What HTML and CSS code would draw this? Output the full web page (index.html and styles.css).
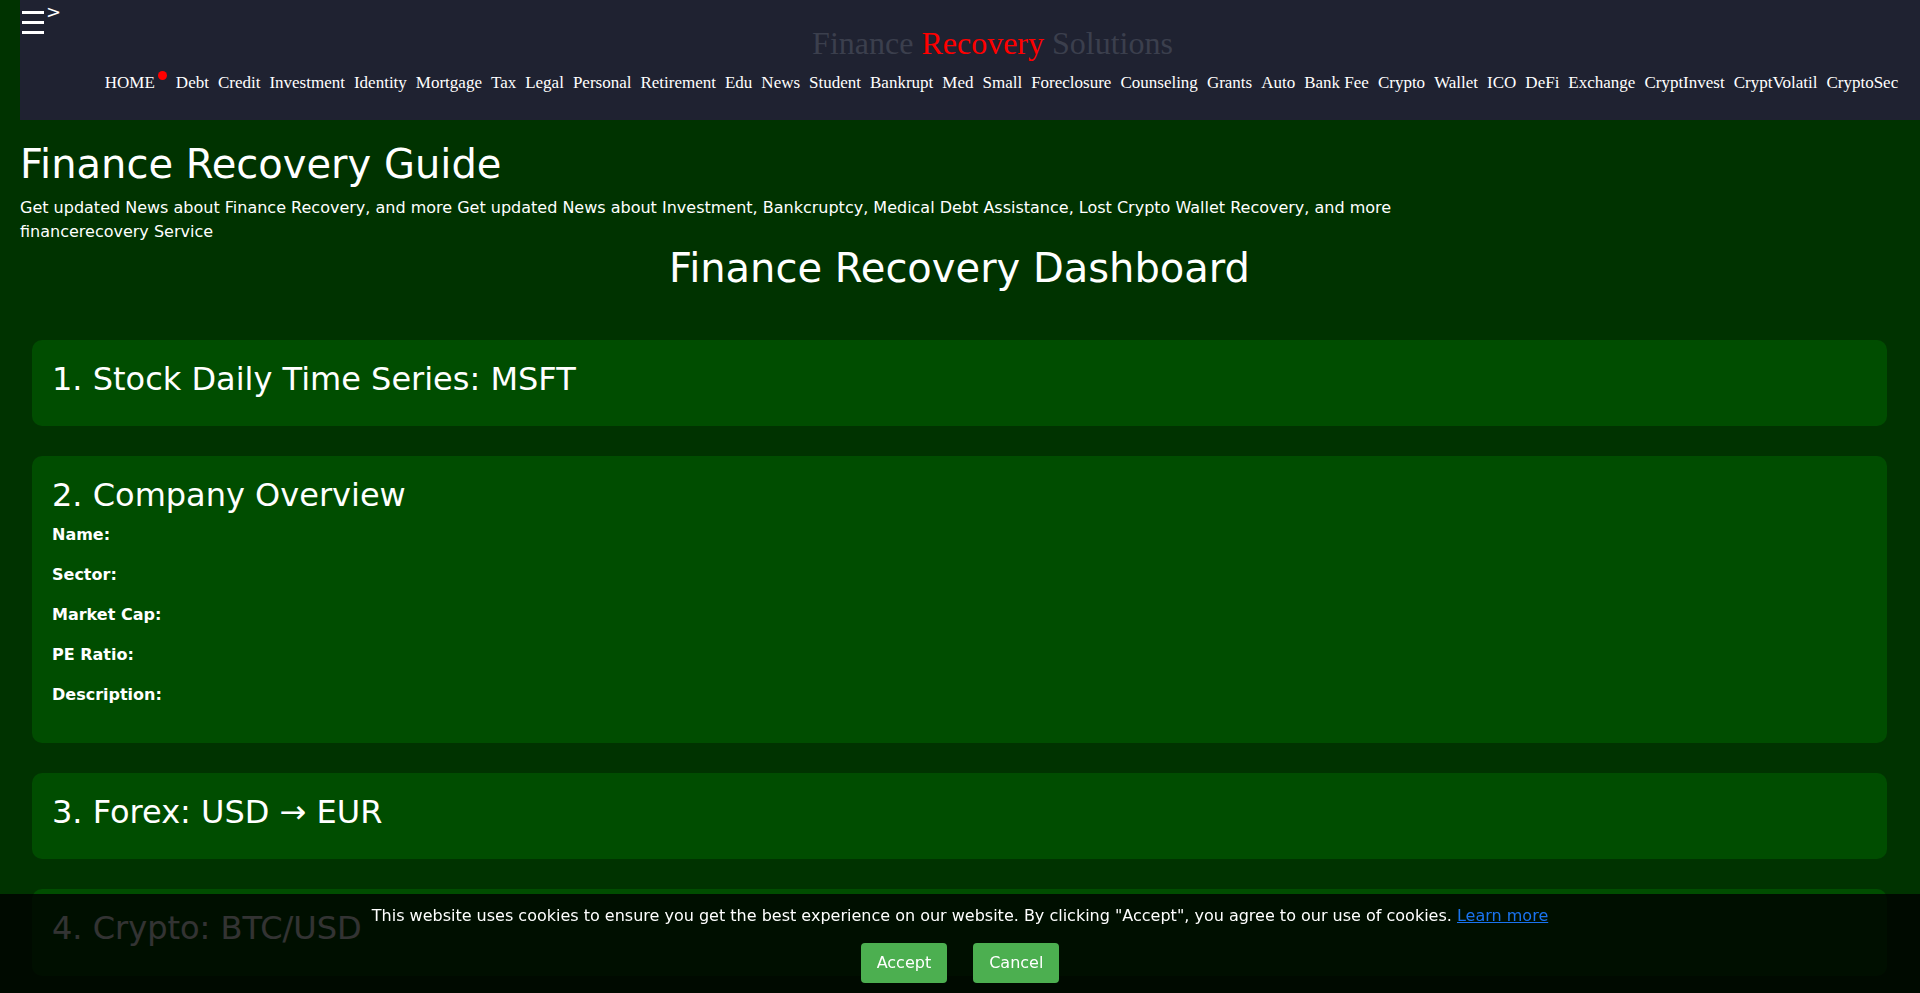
FILE: index.html
```html
<!DOCTYPE html>
<html lang="en">
<head>
<meta charset="utf-8">
<title>Finance Recovery Guide</title>
<link rel="stylesheet" href="styles.css">
</head>
<body>
<header class="topbar">
  <div class="toggle">
    <span class="burger"><i></i><i></i><i></i></span>
    <span class="caret">&gt;</span>
  </div>
  <div class="topbar-main">
    <div class="brand">Finance <span class="brand-red">Recovery</span> Solutions</div>
    <nav class="nav">
      <a class="nav-link home" href="#">HOME<span class="dot"></span></a>
      <a class="nav-link" href="#">Debt</a>
      <a class="nav-link" href="#">Credit</a>
      <a class="nav-link" href="#">Investment</a>
      <a class="nav-link" href="#">Identity</a>
      <a class="nav-link" href="#">Mortgage</a>
      <a class="nav-link" href="#">Tax</a>
      <a class="nav-link" href="#">Legal</a>
      <a class="nav-link" href="#">Personal</a>
      <a class="nav-link" href="#">Retirement</a>
      <a class="nav-link" href="#">Edu</a>
      <a class="nav-link" href="#">News</a>
      <a class="nav-link" href="#">Student</a>
      <a class="nav-link" href="#">Bankrupt</a>
      <a class="nav-link" href="#">Med</a>
      <a class="nav-link" href="#">Small</a>
      <a class="nav-link" href="#">Foreclosure</a>
      <a class="nav-link" href="#">Counseling</a>
      <a class="nav-link" href="#">Grants</a>
      <a class="nav-link" href="#">Auto</a>
      <a class="nav-link" href="#">Bank Fee</a>
      <a class="nav-link" href="#">Crypto</a>
      <a class="nav-link" href="#">Wallet</a>
      <a class="nav-link" href="#">ICO</a>
      <a class="nav-link" href="#">DeFi</a>
      <a class="nav-link" href="#">Exchange</a>
      <a class="nav-link" href="#">CryptInvest</a>
      <a class="nav-link" href="#">CryptVolatil</a>
      <a class="nav-link" href="#">CryptoSec</a>
    </nav>
  </div>
</header>

<section class="intro">
  <h1 class="intro-title">Finance Recovery Guide</h1>
  <p class="intro-text">Get updated News about Finance Recovery, and more Get updated News about Investment, Bankcruptcy, Medical Debt Assistance, Lost Crypto Wallet Recovery, and more<br>financerecovery Service</p>
</section>

<main class="dashboard">
  <h1 class="dash-title">Finance Recovery Dashboard</h1>

  <section class="card">
    <h2 class="card-title">1. Stock Daily Time Series: MSFT</h2>
  </section>

  <section class="card">
    <h2 class="card-title">2. Company Overview</h2>
    <p class="field"><strong>Name:</strong></p>
    <p class="field"><strong>Sector:</strong></p>
    <p class="field"><strong>Market Cap:</strong></p>
    <p class="field"><strong>PE Ratio:</strong></p>
    <p class="field"><strong>Description:</strong></p>
  </section>

  <section class="card">
    <h2 class="card-title">3. Forex: USD &rarr; EUR</h2>
  </section>

  <section class="card">
    <h2 class="card-title">4. Crypto: BTC/USD</h2>
  </section>
</main>

<div class="cookie">
  <p class="cookie-text">This website uses cookies to ensure you get the best experience on our website. By clicking "Accept", you agree to our use of cookies. <a class="cookie-link" href="#">Learn more</a></p>
  <div class="cookie-actions">
    <button class="cookie-btn">Accept</button>
    <button class="cookie-btn">Cancel</button>
  </div>
</div>
</body>
</html>
```

FILE: styles.css
```css
* { box-sizing: border-box; }

html, body {
  margin: 0;
  padding: 0;
}

body {
  background: #003300;
  color: #ffffff;
  font-family: "DejaVu Sans", "Noto Sans", sans-serif;
  font-size: 16px;
  line-height: 1.5;
  overflow-x: hidden;
}

/* ---------- top bar ---------- */
.topbar {
  margin-left: 20px;
  height: 120px;
  background: #1f2231;
  display: flex;
}

.toggle {
  width: 45px;
  flex: none;
  display: flex;
  align-items: flex-start;
}

.burger {
  display: flex;
  flex-direction: column;
  gap: 7px;
  margin: 11px 0 0 2px;
}

.burger i {
  display: block;
  width: 22px;
  height: 3px;
  background: #ffffff;
}

.caret {
  font-family: "DejaVu Sans", sans-serif;
  font-size: 18px;
  line-height: 1;
  color: #ffffff;
  margin: 3px 0 0 2px;
}

.topbar-main {
  flex: 1;
  display: flex;
  flex-direction: column;
  align-items: center;
  padding-top: 24px;
}

.brand {
  font-family: "Liberation Serif", "Times New Roman", serif;
  font-size: 32px;
  line-height: 38px;
  color: #3b3f4d;
}

.brand-red { color: #ff0000; }

.nav {
  display: flex;
  gap: 9px;
  margin-top: 8px;
  padding-left: 18px;
  font-family: "Liberation Serif", "Times New Roman", serif;
  font-size: 17px;
  line-height: 25px;
  white-space: nowrap;
}

.nav-link {
  color: #ffffff;
  text-decoration: none;
}

.home {
  position: relative;
  padding-right: 12px;
}

.dot {
  position: absolute;
  right: 0;
  top: 1px;
  width: 9px;
  height: 9px;
  border-radius: 50%;
  background: #ff0000;
}

/* ---------- intro ---------- */
.intro {
  padding: 0 20px;
}

.intro-title {
  margin: 20px 0 8px;
  font-size: 40px;
  font-weight: 400;
  line-height: 1.2;
}

.intro-text {
  margin: 0;
}

/* ---------- dashboard ---------- */
.dashboard {
  padding: 0 33px 40px 32px;
}

.dash-title {
  margin: 0 0 48px;
  text-align: center;
  font-size: 40px;
  font-weight: 400;
  line-height: 1.2;
}

.card {
  background: #004d00;
  border-radius: 10px;
  padding: 20px;
  margin-bottom: 30px;
}

.card-title {
  margin: 0 0 8px;
  font-size: 32px;
  font-weight: 400;
  line-height: 1.2;
}

.field {
  margin: 0 0 16px;
}

/* ---------- cookie banner ---------- */
.cookie {
  position: fixed;
  left: 0;
  right: 0;
  bottom: 0;
  background: rgba(0, 0, 0, 0.8);
  padding: 10px 0;
  text-align: center;
}

.cookie-text {
  margin: 0 0 15px;
}

.cookie-link {
  color: #1a73f0;
}

.cookie-actions {
  display: flex;
  justify-content: center;
  gap: 26px;
}

.cookie-btn {
  background: #4caf50;
  color: #ffffff;
  border: none;
  border-radius: 4px;
  padding: 8px 16px;
  font-family: "DejaVu Sans", sans-serif;
  font-size: 16px;
  line-height: 24px;
}
```
